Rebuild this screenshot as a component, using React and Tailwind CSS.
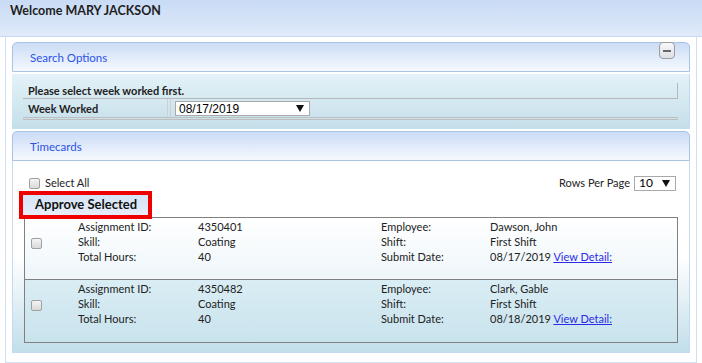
import React from "react";

function Box() {
  return (
    <div className="w-[11px] h-[11px] rounded-[2px] border border-[#a0a0a0] bg-gradient-to-b from-[#f4f4f4] to-[#d9d9d9]" />
  );
}

function Arrow() {
  return (
    <svg width="8" height="7" viewBox="0 0 8 7">
      <polygon points="0,0 8,0 4,7" fill="#111" />
    </svg>
  );
}

function Row({ id, skill, hours, emp, shift, date, bg }) {
  return (
    <div className={`grid grid-cols-[53px_120px_183px_109px_1fr] h-[62px] pt-[1px] ${bg}`}>
      <div className="h-[45px] flex items-center pl-[6px] pt-[3px]">
        <Box />
      </div>
      <div className="leading-[15px]">
        <div>Assignment ID:</div>
        <div>Skill:</div>
        <div>Total Hours:</div>
      </div>
      <div className="leading-[15px]">
        <div>{id}</div>
        <div>{skill}</div>
        <div>{hours}</div>
      </div>
      <div className="leading-[15px]">
        <div>Employee:</div>
        <div>Shift:</div>
        <div>Submit Date:</div>
      </div>
      <div className="leading-[15px]">
        <div>{emp}</div>
        <div>{shift}</div>
        <div>
          {date} <span className="text-[#2a2ae8] underline">View Detail:</span>
        </div>
      </div>
    </div>
  );
}

function PanelHeader({ title, children }) {
  return (
    <div className="h-[30px] rounded-t-[5px] border border-[#a9c3e6] bg-gradient-to-b from-[#cbdcf5] to-[#f6f9fe] flex items-start">
      <div className="flex-1 h-full flex items-center pl-[17px] pt-[1px] text-[#2b52ea] text-[11.5px]">{title}</div>
      {children}
    </div>
  );
}

export default function App() {
  return (
    <div className="w-[702px] h-[363px] overflow-hidden bg-white font-['Lato',sans-serif] text-[#222]">
      <div className="h-[37px] border-b border-[#c6d9f2] bg-gradient-to-b from-[#c9dbf5] to-[#e0eafa] pl-[10px] pt-[2px] text-[12.5px] font-bold text-[#1e1e1e] leading-[18px]">
        Welcome MARY JACKSON
      </div>
      <div className="ml-[5px] w-[692px] h-[326px] border-x border-b border-[#cfe0f4] px-[6px] pt-[5px]">
        <PanelHeader title="Search Options">
          <div className="-mt-px mr-[14px] w-[16px] h-[17px] rounded-[4px] border border-[#9c9c9c] bg-gradient-to-b from-[#f8f8f8] to-[#dcdfe6] flex items-center justify-center">
            <div className="w-[8px] h-[2px] bg-[#666]" />
          </div>
        </PanelHeader>
        <div className="mt-[2px] h-[55px] border-r border-[#c3daf1] bg-gradient-to-b from-[#e4f2f8] to-[#c4dfea] pl-[11px] pr-[11px] pt-[9px] text-[11px]">
          <div className="h-[16px] border-b border-r border-[#b7b7b7] pl-[5px] font-bold leading-[15px]">
            Please select week worked first.
          </div>
          <div className="flex h-[19px] border-b border-[#bdbdbd]">
            <div className="w-[145px] border-r border-[#cfcfcf] pl-[5px] pt-[2px] font-bold leading-[15px]">Week Worked</div>
            <div className="w-[2px]" />
            <div className="border-l border-[#cfcfcf] pl-[4px] pt-[2px]">
              <div className="w-[135px] h-[15px] bg-white border border-[#a9a9a9] flex items-center justify-between pl-[3px] pr-[5px] font-['Liberation_Sans',sans-serif] text-[12px] text-black">
                <span>08/17/2019</span>
                <Arrow />
              </div>
            </div>
          </div>
          <div className="h-[2px] border-b border-[#bdbdbd]" />
        </div>
        <div className="mt-[2px]">
          <PanelHeader title="Timecards" />
        </div>
        <div className="h-[192px] border-x border-b border-[#c3daf1] bg-gradient-to-b from-white via-white to-[#c2deea] px-[11px] pt-[14px] text-[11px]">
          <div className="flex items-center justify-between h-[16px]">
            <div className="flex items-center gap-[5px] pl-[5px]">
              <Box />
              <span>Select All</span>
            </div>
            <div className="flex items-center gap-[4px] pr-[2px]">
              <span>Rows Per Page</span>
              <div className="w-[42px] h-[15px] bg-white border border-[#a9a9a9] flex items-center justify-between pl-[4px] pr-[5px] text-[12px] text-black">
                <span>10</span>
                <Arrow />
              </div>
            </div>
          </div>
          <div className="mt-[4px] ml-[-1px]">
            <div className="w-[125px] h-[20px] bg-gradient-to-b from-[#d6e4f6] to-[#e6eef9] outline-[4px] outline-solid outline-[#ee0000] flex items-center pl-[12px] text-[13px] font-bold text-[#111]">
              Approve Selected
            </div>
          </div>
          <div className="mt-[2px] border border-[#808080]">
            <Row id="4350401" skill="Coating" hours="40" emp="Dawson, John" shift="First Shift" date="08/17/2019" bg="bg-gradient-to-b from-white to-[#eef6fa] border-b border-[#808080]" />
            <Row id="4350482" skill="Coating" hours="40" emp="Clark, Gable" shift="First Shift" date="08/18/2019" bg="bg-gradient-to-b from-[#daedf4] to-[#c9e3ed] h-[61px]" />
          </div>
        </div>
      </div>
    </div>
  );
}
